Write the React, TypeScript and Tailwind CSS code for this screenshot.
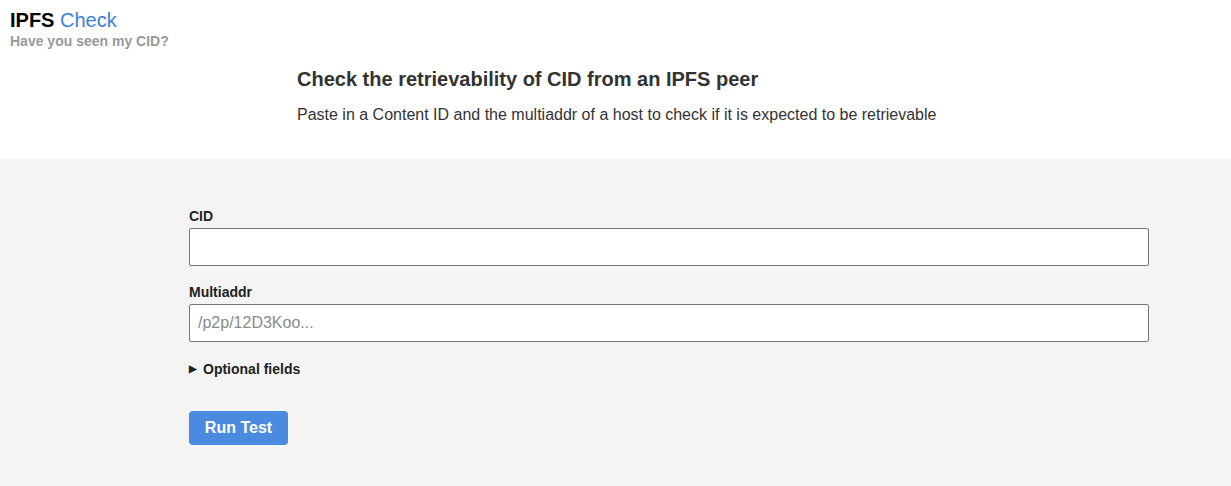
export default function App() {
  return (
    <div className="min-h-[486px] bg-[#f4f4f4] text-[#333]" style={{ fontFamily: '"Liberation Sans", Arial, sans-serif' }}>
      <header className="bg-white h-[159px] relative">
        <div className="absolute left-[10px] top-[8px]">
          <div className="text-[20px] leading-[24px]">
            <span className="font-bold text-black">IPFS</span>{" "}
            <span className="text-[#3d7fd9]">Check</span>
          </div>
          <div className="text-[14px] leading-[16px] font-bold text-[#999] mt-[1px]">Have you seen my CID?</div>
        </div>
        <div className="pl-[297px] pt-[66px]">
          <h1 className="text-[20px] leading-[26px] font-bold text-[#333]">Check the retrievability of CID from an IPFS peer</h1>
          <p className="text-[16px] leading-[20px] mt-[13px] text-[#333]">Paste in a Content ID and the multiaddr of a host to check if it is expected to be retrievable</p>
        </div>
      </header>
      <main className="pl-[189px] pt-[49px] pb-[42px]">
        <div className="w-[960px] flex flex-col">
          <label className="text-[14px] leading-[16px] font-bold text-[#222]">CID</label>
          <input className="mt-[4px] h-[38px] bg-white border border-[#767676] rounded-[2px] px-[8px] text-[16px] outline-none" />
          <label className="mt-[18px] text-[14px] leading-[16px] font-bold text-[#222]">Multiaddr</label>
          <input
            placeholder="/p2p/12D3Koo..."
            className="mt-[4px] h-[38px] bg-white border border-[#767676] rounded-[2px] px-[8px] text-[16px] outline-none placeholder:text-[#8a8a8a]"
          />
          <div className="mt-[19px] flex items-center gap-[6px] text-[14px] leading-[16px] font-bold text-[#222]">
            <span className="text-[10px] leading-[16px]">▶</span>
            <span>Optional fields</span>
          </div>
          <div className="mt-[34px]">
            <button className="h-[34px] w-[99px] rounded-[4px] bg-[#4a8be0] text-white font-bold text-[16px]">Run Test</button>
          </div>
        </div>
      </main>
    </div>
  );
}
